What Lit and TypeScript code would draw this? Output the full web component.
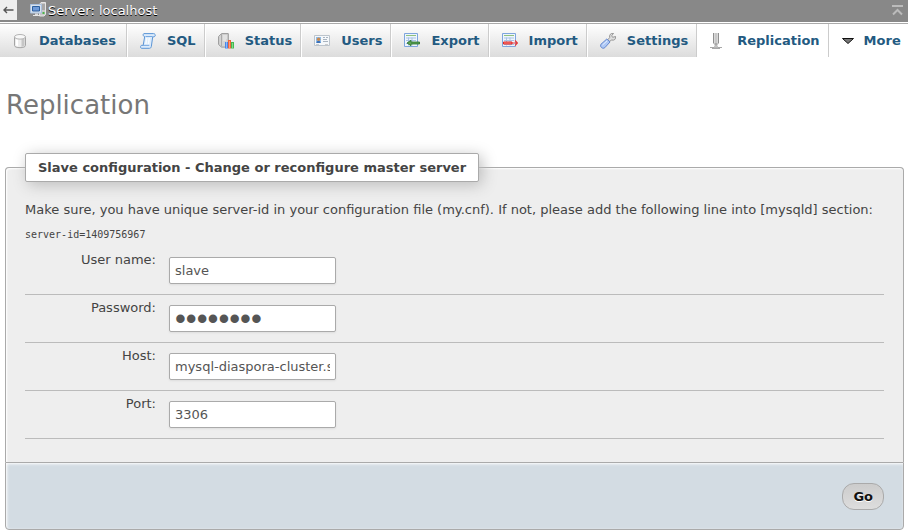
import { LitElement, html, css, svg, type SVGTemplateResult } from "lit";
import { customElement, property } from "lit/decorators.js";

const icons: Record<string, SVGTemplateResult> = {
  databases: svg`
    <path d="M2.500 4v8.500c0 1.400 2.400 2.200 5.500 2.200s5.500-.8 5.500-2.200V4z" fill="#ececec" stroke="#a4a4a4"/>
    <path d="M9.500 6h3v7l-3 1z" fill="#c6c6c6"/>
    <path d="M4 6.500h2V13l-2-.6z" fill="#fff"/>
    <ellipse cx="8" cy="3.800" rx="5.500" ry="2.300" fill="#f8f8f8" stroke="#b4b4b4"/>`,
  sql: svg`
    <path d="M4 .6h9.500c2.200 0 2.400 3 .4 3.200l-1.200.2-1.400 9.600c-.2 1.100-.9 1.700-1.900 1.700H1.600c-1.500 0-1.400-2.900.2-3h1.400L4.700 3.600C2.800 3.400 2.700.8 4 .6z" fill="#dcebfb" stroke="#5b95d6"/>
    <path d="M5.500 3.500h7.200M3 12.400h6.300" stroke="#78a9e0" fill="none"/>
    <path d="M6.800 5l-.9 6M9.300 5l-.9 6" stroke="#f6fbff" stroke-width="1.500"/>`,
  status: svg`
    <path d="M.6 3.500L3.500.6h6.800v12.200l-2.300 1.300H3.500L.6 11.500z" fill="#d4d4d4" stroke="#999"/>
    <path d="M3.500 1v12.500" stroke="#aaa"/>
    <path d="M5 3h4M5 5h4M5 7h3" stroke="#f0f0f0"/>
    <path d="M7 9h3v6.500H7z" fill="#4a88e8"/><path d="M10 7h3v8.500h-3z" fill="#f0643c"/><path d="M13 9h3v6.500h-3z" fill="#46b850"/>
    <path d="M8.500 9v6" stroke="#8ab5fa"/><path d="M11.500 8v7" stroke="#ff9c7c"/><path d="M14.500 10v5" stroke="#82da88"/>`,
  users: svg`
    <path d="M.5 2.500h15v10H.5z" fill="#f5f8fb" stroke="#bcc4cc"/>
    <path d="M2 4h5v6H2z" fill="#8fbce8"/>
    <path d="M2.500 10c0-3 4-3 4 0z" fill="#3a70b8"/><circle cx="4.600" cy="6.200" r="1.700" fill="#c98a50"/>
    <path d="M9 4.500h2m1 0h2M9 6.500h4M9 8.500h5" stroke="#a9b4c0"/>
    <path d="M2 11.500h3m6 0h3" stroke="#ccc"/>`,
  export: svg`
    <path d="M.5.500h13v13H.5z" fill="#eef5fc" stroke="#7ea5dd"/>
    <path d="M2 2.500h10" stroke="#8fc17d"/><path d="M2 5h10M2 7.500h10M2 10.500h10M4.500 4.500v8M8 4.500v8" stroke="#a9c3e5"/>
    <path d="M3 10l4-2.700v1.700h8.500v2H7v1.700z" fill="#5da154" stroke="#26722a" stroke-width=".8"/>`,
  import: svg`
    <path d="M.5.500h13v13H.5z" fill="#eef5fc" stroke="#7ea5dd"/>
    <path d="M2 2.500h10" stroke="#8fc17d"/><path d="M2 5h10M2 7.500h10M2 11.500h10M4.500 4.500v8M8 4.500v8" stroke="#a9c3e5"/>
    <path d="M1.500 9h8.500v2H1.500z" fill="#ff8a80" stroke="#df2525"/>
    <path d="M10 10h5.500M13 7.500l2.500 2.500-2.500 2.500" fill="none" stroke="#e83b3b" stroke-width="1.200"/>`,
  settings: svg`
    <path d="M8 6.500L9.700 4.500C9 2 10.800-.2 13.500.3l-1.800 2.500.9 1.500 3-.8c.5 2.500-1.400 4.300-3.900 3.500L9.500 8.500z" fill="#dedede" stroke="#8c8c8c" stroke-width=".9"/>
    <path d="M6.800 6l3.200 3-5.200 5.700c-2.200 1.700-5.200-.9-3.900-3.400z" fill="#aec8f5" stroke="#6487cc"/>
    <path d="M2.500 12l4.700-4.200" stroke="#e4efff"/>`,
  replication: svg`
    <path d="M3.500 0v10l2 2M6 0v11M8.500 0v10L6.500 12" fill="none" stroke="#8f8f8f"/>
    <path d="M4.700 0v10M7.300 0v10" stroke="#d0d0d0"/><path d="M6 10v4" stroke="#aaa" stroke-width="2"/>
    <path d="M0 14.500h12M2 15.500h8" stroke="#a8a8a8"/><path d="M4 12.500h4v2H4z" fill="#c4c4c4"/>`,
  more: svg`<path d="M2.500 5.500h11L8 10.500z" fill="#777" stroke="#111"/>`,
  server: svg`
    <path d="M9.500 2.500l1.500-2h4.500v12l-1.500 1.500H9.500z" fill="#c8c8c8" stroke="#e6e6e6"/>
    <path d="M12 3h3M12 5h3M12 7h3" stroke="#888"/><path d="M12.500 10h2v2h-2z" fill="#4ab54a"/>
    <path d="M.5 2.500h11v8.500H.5z" fill="#d9e3ee" stroke="#a9c0de"/>
    <path d="M2.500 4.500h7v4.500h-7z" fill="#6e9ad8" stroke="#2c5f9e"/>
    <path d="M5 11.500h3V13H5z" fill="#ddd"/><path d="M3 13.500h7" stroke="#e6e6e6"/>`,
};

const icon = (name: string) =>
  html`<svg class="icon" viewBox="0 0 16 16" width="16" height="16" aria-hidden="true">${icons[name]}</svg>`;

@customElement("server-bar")
export class ServerBar extends LitElement {
  static styles = css`
    :host { display: flex; align-items: stretch; height: 22px; background: #888; color: #fff; }
    .back { width: 17px; height: 20px; padding: 0; border: 0; background: #eee; display: flex; align-items: center; justify-content: center; }
    .server { display: flex; align-items: center; gap: 2px; height: 20px; margin-left: 13px; color: #fff; text-decoration: none; text-shadow: 0 1px 0 #000; }
    .top { margin: 0 4px 0 auto; padding: 0; width: 13px; height: 20px; border: 0; background: none; display: flex; align-items: center; }
  `;
  render() {
    return html`
      <button class="back" aria-label="Hide panel">
        <svg width="11" height="8" viewBox="0 0 11 8"><path d="M1 4h9.500M4 1L1 4l3 3" fill="none" stroke="#555" stroke-width="1.400"/></svg>
      </button>
      <a class="server" href="#server">${icon("server")}<span>Server: localhost</span></a>
      <button class="top" aria-label="Page top">
        <svg width="13" height="12" viewBox="0 0 13 12"><path d="M1 2h11M2 10.500l4.500-4.500 4.500 4.500" fill="none" stroke="#bbb" stroke-width="2"/></svg>
      </button>`;
  }
}

@customElement("top-menu")
export class TopMenu extends LitElement {
  @property() current = "replication";
  private tabs = ["Databases", "SQL", "Status", "Users", "Export", "Import", "Settings", "Replication", "More"];
  static styles = css`
    :host { display: block; margin-top: 1px; border-top: 1px solid #aaa; overflow: hidden; }
    ul { display: flex; margin: 0; padding: 0; list-style: none; }
    li { flex: none; border-right: 1px solid #ccc; }
    li:last-child { flex: 1; border: 0; }
    a { display: flex; align-items: center; gap: 11px; height: 33px; box-sizing: border-box; padding: 0 8px 0 12px;
      background: linear-gradient(#fff, #dcdcdc); color: #235a81; font-weight: bold; text-decoration: none; white-space: nowrap;
      border-left: 1px solid #fff; }
    li:first-child a { border-left: 0; padding-right: 10px; }
    a.plain { background: #fff; }
    a.more { gap: 8px; padding: 0 8px 0 10px; }
  `;
  render() {
    return html`<nav><ul>${this.tabs.map((tab) => {
      const id = tab.toLowerCase();
      const cls = id === "more" ? "plain more" : id === this.current ? "plain" : "";
      return html`<li><a class=${cls} href="#${id}">${icon(id)}<span>${tab}</span></a></li>`;
    })}</ul></nav>`;
  }
}

@customElement("replication-form")
export class ReplicationForm extends LitElement {
  private fields = [
    { id: "username", label: "User name:", type: "text", value: "slave" },
    { id: "password", label: "Password:", type: "password", value: "password" },
    { id: "hostname", label: "Host:", type: "text", value: "mysql-diaspora-cluster.service" },
    { id: "port", label: "Port:", type: "text", value: "3306" },
  ];
  static styles = css`
    :host { display: block; margin: 0 4px 0 5px; }
    form { margin: 0; }
    fieldset { min-width: 0; margin: 0; padding: 20px 19px 23px; border: 1px solid #aaa; border-bottom: 0; border-radius: 4px 4px 0 0;
      background: #eee; box-shadow: inset 1px 1px 2px #fff; }
    legend { padding: 6px 12px; border: 1px solid #aaa; border-radius: 2px; background: #fff; font-weight: bold;
      box-shadow: 3px 3px 15px #bbb; }
    p { margin: 0; }
    pre { margin: 10px 0 5px; font: 10px/15px "DejaVu Sans Mono", monospace; }
    .row { display: flex; align-items: flex-start; gap: 13px; padding: 10px 0; border-bottom: 1px solid #bbb; }
    label { width: 131px; text-align: right; margin-top: -5px; }
    input { box-sizing: border-box; width: 167px; height: 27px; padding: 0 5px; border: 1px solid #aaa; border-radius: 2px;
      background: #fff; color: #555; font: inherit; box-shadow: 0 1px 2px #ddd; }
    input[type="password"] { font-family: "Liberation Sans", sans-serif; font-size: 31px; }
    .footer { display: flex; justify-content: flex-end; padding: 20px 19px 19px; border: 1px solid #aaa; border-radius: 0 0 4px 4px;
      background: #d3dce3; box-shadow: inset 1px 1px 3px #fff; }
    .go { height: 27px; padding: 0 10px; border: 1px solid #aaa; border-radius: 12px; background: linear-gradient(#ccc, #ddd);
      color: #111; font: inherit; font-weight: bold; text-shadow: 0 1px 0 #fff; }
  `;
  render() {
    return html`<form @submit=${(e: Event) => e.preventDefault()}>
      <fieldset>
        <legend>Slave configuration - Change or reconfigure master server</legend>
        <p>Make sure, you have unique server-id in your configuration file (my.cnf). If not, please add the following line into [mysqld] section:</p>
        <pre>server-id=1409756967</pre>
        ${this.fields.map((f) => html`<div class="row">
          <label for=${f.id}>${f.label}</label>
          <input id=${f.id} type=${f.type} .value=${f.value} autocomplete="off">
        </div>`)}
      </fieldset>
      <div class="footer"><button class="go">Go</button></div>
    </form>`;
  }
}

@customElement("app-root")
export class AppRoot extends LitElement {
  static styles = css`
    :host { display: block; background: #fff; color: #444; font: 13px/15px "DejaVu Sans", sans-serif; }
    h2 { margin: 32px 6px; font-size: 26px; line-height: 32px; font-weight: normal; color: #777; }
  `;
  render() {
    return html`<server-bar></server-bar><top-menu></top-menu>
      <main><h2>Replication</h2><replication-form></replication-form></main>`;
  }
}
